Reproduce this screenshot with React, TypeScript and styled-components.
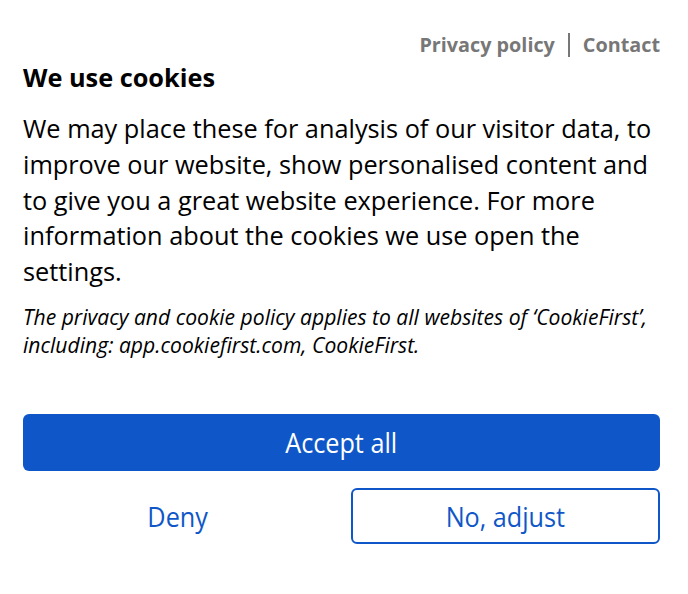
import React from "react";
import styled, { createGlobalStyle } from "styled-components";

const Global = createGlobalStyle`
  html, body { margin: 0; padding: 0; background: #fff; }
  body { font-family: "Open Sans", "Noto Sans", sans-serif; color: #000; }
`;

const Banner = styled.div`
  width: 688px;
  height: 594px;
  box-sizing: border-box;
  padding: 32px 28px 0 23px;
  display: flex;
  flex-direction: column;
`;

const TopLinks = styled.nav`
  display: flex;
  justify-content: flex-end;
  align-items: center;
  gap: 13px;
  font-size: 19.8px;
  font-weight: 700;
  color: #777;
  line-height: 26px;
`;

const Link = styled.a`
  color: #777;
  text-decoration: none;
`;

const Divider = styled.span`
  width: 2px;
  height: 24px;
  background: #777;
`;

const Title = styled.h2`
  margin: 3px 0 0;
  font-size: 25.3px;
  font-weight: 700;
  line-height: 32px;
`;

const Body = styled.p`
  margin: 18px 0 0;
  font-size: 25.3px;
  line-height: 35.8px;
  font-weight: 400;
`;

const Note = styled.p`
  margin: 13px 0 0;
  font-size: 21.1px;
  line-height: 28px;
  font-style: italic;
`;

const Actions = styled.div`
  margin-top: 55px;
  display: grid;
  grid-template-columns: 1fr 1fr;
  column-gap: 18px;
  row-gap: 17px;
`;

const Button = styled.button<{ $variant: "primary" | "ghost" | "outline" }>`
  grid-column: ${(p) => (p.$variant === "primary" ? "1 / -1" : "auto")};
  height: ${(p) => (p.$variant === "primary" ? "57px" : "56px")};
  box-sizing: border-box;
  border-radius: 6px;
  font-family: "Open Sans", "Noto Sans", sans-serif;
  font-size: 28px;
  padding: 0;
  cursor: pointer;
  display: flex;
  align-items: center;
  justify-content: center;
  background: ${(p) => (p.$variant === "primary" ? "#0f57c8" : "#fff")};
  color: ${(p) => (p.$variant === "primary" ? "#fff" : "#0f57c8")};
  border: ${(p) => (p.$variant === "outline" ? "2px solid #0f57c8" : "none")};
`;

const Label = styled.span`
  display: inline-block;
  transform: scaleX(0.9);
`;

export default function App() {
  return (
    <>
      <Global />
      <Banner>
        <TopLinks>
          <Link href="#">Privacy policy</Link>
          <Divider />
          <Link href="#">Contact</Link>
        </TopLinks>
        <Title>We use cookies</Title>
        <Body>
          We may place these for analysis of our visitor data, to improve our website, show
          personalised content and to give you a great website experience. For more information
          about the cookies we use open the settings.
        </Body>
        <Note>
          The privacy and cookie policy applies to all websites of ‘CookieFirst’, including:
          app.cookiefirst.com, CookieFirst.
        </Note>
        <Actions>
          <Button $variant="primary"><Label>Accept all</Label></Button>
          <Button $variant="ghost"><Label>Deny</Label></Button>
          <Button $variant="outline"><Label>No, adjust</Label></Button>
        </Actions>
      </Banner>
    </>
  );
}
